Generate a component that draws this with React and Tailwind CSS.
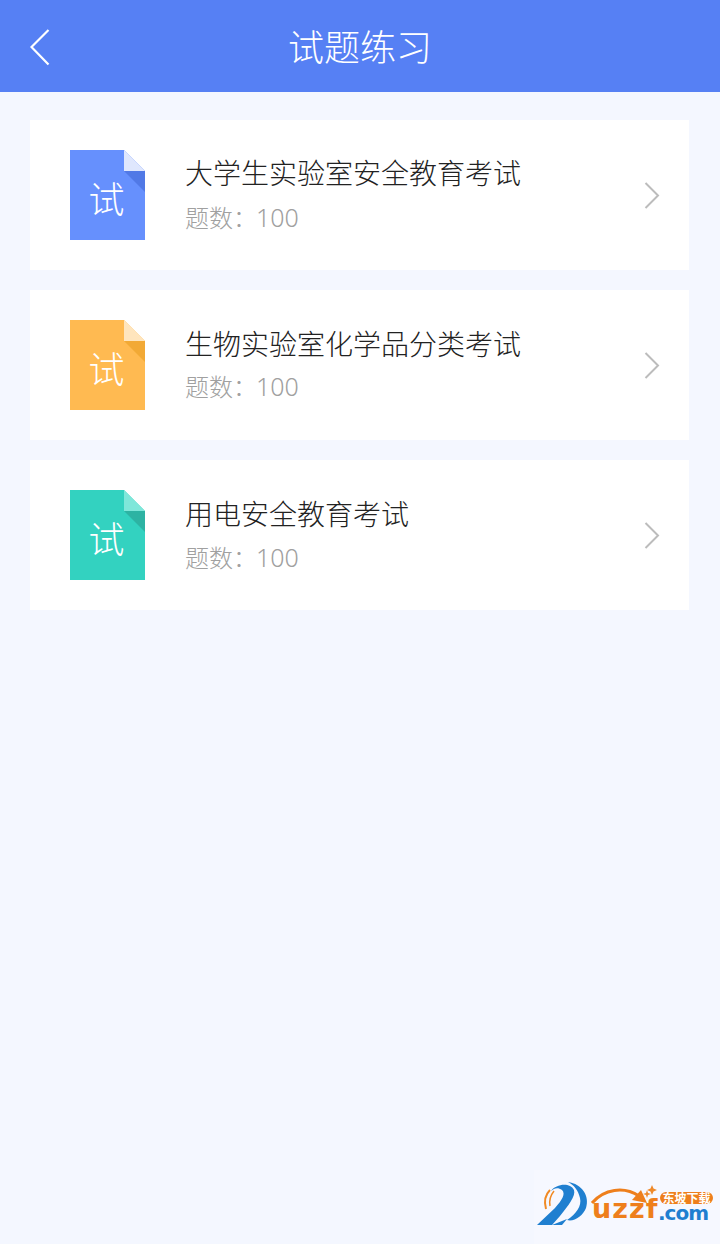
const font = { fontFamily: '"Noto Sans CJK SC", "Noto Sans", sans-serif' };

function DocIcon({ body, fold, shade }) {
  return (
    <div className="relative flex h-[90px] w-[75px] shrink-0 items-center justify-center">
      <svg className="absolute inset-0" width="75" height="90" viewBox="0 0 75 90">
        <path d="M0 0H54L75 21V90H0Z" fill={body} />
        <path d="M54 0L75 21H54Z" fill={fold} />
        <path d="M54 21H75V42Z" fill={shade} />
      </svg>
      <span className="relative mt-[3px] -ml-[2px] text-[36px] leading-none font-light text-white">试</span>
    </div>
  );
}

function Row({ title, body, fold, shade, textClass, gapClass }) {
  return (
    <div className="flex h-[150px] items-center bg-white pl-10 pr-[29px]">
      <DocIcon body={body} fold={fold} shade={shade} />
      <div className={`ml-10 flex flex-1 flex-col self-start ${textClass}`}>
        <div className="text-[28px] leading-[40px] font-light text-[#222222]">{title}</div>
        <div className={`flex items-center text-[24px] leading-[34px] font-light text-[#a0a0a0] ${gapClass}`}>
          <span>{"题数\uFF1A"}</span>
          <span className="-ml-px text-[25px]" style={{ fontFamily: '"Noto Sans", sans-serif' }}>100</span>
        </div>
      </div>
      <svg width="16" height="28" viewBox="0 0 16 28" fill="none" stroke="#bcbcbc" strokeWidth="2" className="mt-[2px] shrink-0">
        <path d="M1.5 1L14 13.5L1.5 26" />
      </svg>
    </div>
  );
}

function Watermark() {
  const mark = { fontFamily: '"DejaVu Sans", sans-serif' };
  return (
    <div className="absolute bottom-0 right-0 h-[74px] w-[186px] bg-[#f6f8ff]">
      <svg className="absolute -left-[14px] top-0" width="200" height="74" viewBox="0 0 200 74">
        <path d="M17 55L35 38C42 30 46 24 42 20C38 17 34 18 31 21C36 14 50 12 54 20C56 26 48 36 40 46L32 55Z" fill="#1f7fd0" />
        <path d="M48 12C62 14 70 26 66 38C63 46 54 52 47 50C56 44 62 36 60 28C58 20 54 15 48 12Z" fill="#1f7fd0" />
        <path d="M32 55L47 49L42 55Z" fill="#1f7fd0" />
        <path d="M30 20C25 25 24 32 26 39" fill="none" stroke="#f08a24" strokeWidth="2" />
        <path d="M34 21C30 26 29 31 30 36" fill="none" stroke="#f08a24" strokeWidth="1.500" />
        <path d="M72 33C84 19 104 16 119 26" fill="none" stroke="#ee7f1c" strokeWidth="3" />
        <path d="M127 33L112 30L121 20Z" fill="#ee7f1c" />
        <path d="M132 15l1.500 3.500 3.500 1.500-3.500 1.500-1.500 3.500-1.500-3.500-3.500-1.500 3.500-1.500z" fill="#ef8a2a" />
        <path d="M127 20l1 3 3 1-3 1-1 3-1-3-3-1 3-1z" fill="#ef8a2a" />
      </svg>
      <span className="absolute left-[58px] top-[30px] text-[27px] leading-[18px] font-bold tracking-[1px] text-[#ee7f1c]" style={mark}>uzzf</span>
      <span className="absolute left-[124px] top-[36px] text-[20px] leading-[14px] font-bold tracking-[-1px] text-[#1f7fd0]" style={mark}>.com</span>
      <span className="absolute left-[126px] top-[22px] w-[53px] rounded-[6px] bg-[#ee7f1c] text-center text-[12px] leading-[12px] font-bold text-white">东坡下载</span>
    </div>
  );
}

export default function App() {
  return (
    <div className="relative min-h-[1244px] w-[720px] overflow-hidden bg-[#f4f7ff]" style={font}>
      <header className="relative flex h-[92px] items-center justify-center bg-[#5680f4]">
        <svg className="absolute left-[30px] top-[29px]" width="20" height="37" viewBox="0 0 20 37" fill="none" stroke="#fff" strokeWidth="2.2">
          <path d="M18.5 1L1.5 18L18.5 35.5" />
        </svg>
        <h1 className="-mt-[2px] text-[36px] leading-none font-light text-white">试题练习</h1>
      </header>
      <main className="flex flex-col gap-5 pl-[30px] pr-[31px] pt-7">
        <Row title="大学生实验室安全教育考试" body="#6690fd" fold="#dfe7fd" shade="#5179e6" textClass="mt-[32px]" gapClass="mt-[8px]" />
        <Row title="生物实验室化学品分类考试" body="#ffba51" fold="#ffe5bd" shade="#f2a935" textClass="mt-[33px]" gapClass="mt-[6px]" />
        <Row title="用电安全教育考试" body="#33d2c0" fold="#7fe7da" shade="#2db3a3" textClass="mt-[33px]" gapClass="mt-[7px]" />
      </main>
      <Watermark />
    </div>
  );
}
